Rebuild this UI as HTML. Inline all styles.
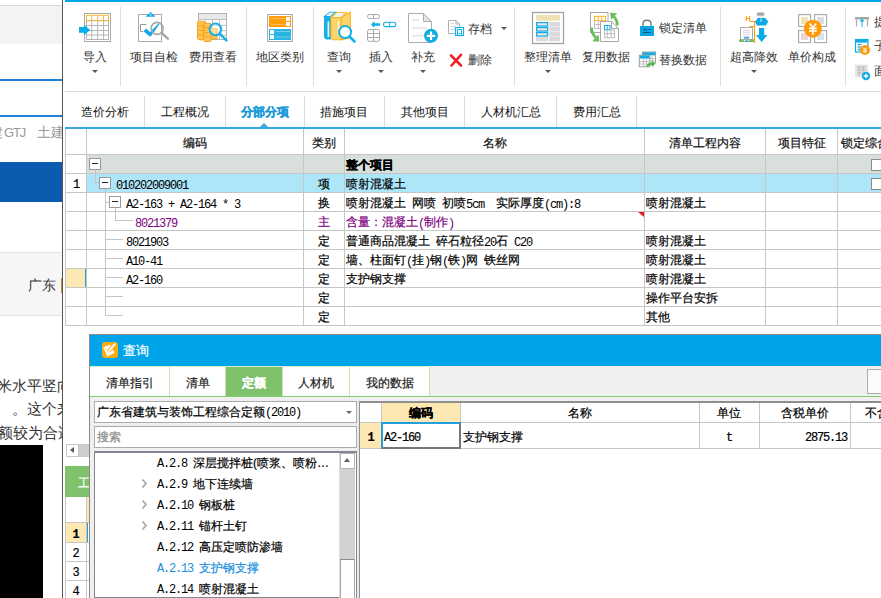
<!DOCTYPE html>
<html><head><meta charset="utf-8">
<style>
*{margin:0;padding:0;box-sizing:border-box}
html,body{width:881px;height:598px;overflow:hidden;background:#fff;position:relative;font-family:"Liberation Sans",sans-serif;font-size:12px;color:#000}
.a{position:absolute}
.m{font-family:"Liberation Mono",monospace;letter-spacing:-1.2px;-webkit-text-stroke-width:0}
.mb{position:relative;top:1px}
.t{position:absolute;white-space:nowrap;line-height:12px;font-size:12px;-webkit-text-stroke-width:0.2px}
.sep{position:absolute;width:1px;background:#dedede}
.rt{-webkit-text-stroke-width:0}
.rb{position:absolute;white-space:nowrap;line-height:12px;font-size:12px;color:#333;text-align:center;padding-top:1px}
.arr{position:absolute;width:0;height:0;border-left:3px solid transparent;border-right:3px solid transparent;border-top:3px solid #555}
.tab{position:absolute;top:92px;height:35px;text-align:center;line-height:12px;padding-top:14px;font-size:12px;color:#111}
.tsep{position:absolute;top:96px;height:31px;width:1px;background:#dcdcdc}
.vl{position:absolute;width:1px;background:#c6c6c6}
.hl{position:absolute;height:1px;background:#c6c6c6}
.box{position:absolute;width:12px;height:12px;border:1px solid #9a9a9a;background:#fff}
.box:after{content:"";position:absolute;left:2px;top:4px;width:6px;height:1px;background:#222}
.chk{position:absolute;width:12px;height:12px;border:1px solid #8a8a8a;background:#fff}
</style></head><body>

<!-- ============ background web page on the left ============ -->
<div class="a" style="left:0;top:0;width:62px;height:598px;overflow:hidden">
<div class="a" style="left:0;top:5px;width:62px;height:1px;background:#dadada"></div>
<div class="a" style="left:0;top:6px;width:62px;height:38px;background:#f3f3f3"></div>
<div class="a" style="left:0;top:79px;width:62px;height:2px;background:#1d80d6"></div>
<div class="a" style="left:0;top:115px;width:62px;height:2px;background:#1d80d6"></div>
<div class="t rt" style="left:-11px;top:125px;font-size:14px;line-height:14px;color:#9a9a9a">建</div>
<div class="t rt" style="left:4px;top:126px;font-size:13px;line-height:13px;color:#9a9a9a;letter-spacing:-1.2px">GTJ</div>
<div class="t rt" style="left:37px;top:125px;font-size:14px;line-height:14px;color:#9a9a9a">土建</div>
<div class="a" style="left:0;top:162px;width:62px;height:40px;background:#0c5bb1"></div>
<div class="a" style="left:0;top:252px;width:62px;height:1px;background:#e2e2e2"></div>
<div class="a" style="left:0;top:253px;width:62px;height:62px;background:#f6f6f6"></div>
<div class="a" style="left:0;top:315px;width:62px;height:1px;background:#e2e2e2"></div>
<div class="t rt" style="left:28px;top:278px;font-size:14px;line-height:14px;color:#333">广东</div>
<div class="a" style="left:61px;top:278px;width:1px;height:15px;background:#d08a30"></div>
<div class="t rt" style="left:-3px;top:378px;font-size:15px;line-height:16px;color:#333">米水平竖向</div>
<div class="t rt" style="left:12px;top:401px;font-size:15px;line-height:16px;color:#333">。这个来</div>
<div class="t rt" style="left:-2px;top:425px;font-size:15px;line-height:16px;color:#333">额较为合适</div>
<div class="a" style="left:0;top:445px;width:43px;height:153px;background:#000"></div>

</div>

<!-- ============ app window ============ -->
<div class="a" style="left:62px;top:0;width:1px;height:598px;background:#555"></div>
<div class="a" style="left:65px;top:0;width:816px;height:2px;background:#00a8e9"></div>

<!-- ============ ribbon ============ -->
<div class="a" style="left:65px;top:91px;width:816px;height:1px;background:#dcdcdc"></div>
<div class="sep" style="left:120px;top:7px;height:79px"></div>
<div class="sep" style="left:246px;top:7px;height:79px"></div>
<div class="sep" style="left:313px;top:7px;height:79px"></div>
<div class="sep" style="left:514px;top:7px;height:79px"></div>
<div class="sep" style="left:720px;top:7px;height:79px"></div>
<div class="sep" style="left:845px;top:7px;height:79px"></div>

<svg class="a" style="left:0;top:0" width="881" height="91" shape-rendering="geometricPrecision">
 <!-- 导入 -->
 <rect x="84.5" y="13.5" width="26" height="28" fill="#fff" stroke="#ababab"/>
 <g stroke="#b4b4b4" fill="none">
  <path d="M86.5 20.5H108.5M86.5 25.5H108.5M86.5 30.5H108.5M86.5 35H108.5M86.5 39.5H108.5M86.5 20.5V39.5M91.8 20.5V39.5M97.7 20.5V39.5M103.6 20.5V39.5M108.5 20.5V39.5"/>
 </g>
 <rect x="86.5" y="15.3" width="22" height="5.4" fill="none" stroke="#f9b83a"/>
 <path d="M91.8 15.3V20.7M97.7 15.3V20.7M103.6 15.3V20.7" stroke="#f9b83a"/>
 <path d="M79 27H84V24.7L90.2 30L84 35.2V32.8H79Z" fill="#0aaee8"/>

 <!-- 项目自检 -->
 <rect x="138.5" y="14.5" width="23" height="27" fill="#fff" stroke="#ababab"/>
 <path d="M145.8 16.8L147.8 14H149.2L150 12.2H151.3L152 14H153.3L155.3 16.8Z" fill="#1aa9e6"/><rect x="150" y="14.3" width="1.3" height="1.2" fill="#fff"/>
 <path d="M146.5 24.5H140.5V31.5H143" fill="none" stroke="#9a9a9a"/>
 <path d="M143.5 31.2L146.3 28.6L150 32L158.6 23.6L159.4 24.3L151 36.3H149.3Z" fill="#14a8e6"/>
 <circle cx="157.1" cy="28.4" r="6" fill="none" stroke="#a8a8a8" stroke-width="1.6"/>
 <path d="M161.5 32.8L167.8 38.6" stroke="#a8a8a8" stroke-width="2.6" stroke-linecap="round"/>

 <!-- 费用查看 -->
 <rect x="198.5" y="13.5" width="28" height="26" fill="#fff" stroke="#b0b0b0"/>
 <rect x="199" y="14" width="27" height="5.5" fill="#e8e8e8"/>
 <path d="M198.5 19.5H226.5M198.5 25.3H226.5M198.5 30.8H226.5M198.5 35.2H226.5M205.5 19.5V39.5M212.5 19.5V39.5M219.5 19.5V39.5" stroke="#c0c0c0" fill="none"/>
 <g fill="#fdc452" stroke="#f7a21a" stroke-width="1">
  <path d="M197.5 22.5L199 21.3H204L205.5 22.5V38.5L204 39.8H199L197.5 38.5Z"/>
  <path d="M203.5 24.5L205 23.3H210L211.5 24.5V40.2L210 41.5H205L203.5 40.2Z"/>
  <path d="M211 28.5H217V38.8H211Z"/>
 </g>
 <path d="M197.5 26H205.5M197.5 30.5H205.5M197.5 35H205.5M203.5 28H211.5M203.5 32.5H211.5M203.5 37H211.5" stroke="#f7a21a" fill="none"/>
 <circle cx="215.4" cy="29.4" r="5.8" fill="rgba(255,255,255,.45)" stroke="#15b0e6" stroke-width="2"/>
 <path d="M219.6 33.6L226.4 40.4" stroke="#15b0e6" stroke-width="2.6" stroke-linecap="round"/>

 <!-- 地区类别 -->
 <rect x="267.5" y="14.5" width="25" height="27" fill="#fff" stroke="#aaaaaa"/>
 <rect x="269" y="16" width="22" height="11" fill="#ff9d0c"/>
 <rect x="286" y="17" width="4" height="4" fill="#fff"/><rect x="286" y="22" width="4" height="4" fill="#fff"/>
 <path d="M270.5 18.5H285M270.5 24.5H285" stroke="#ffc070" stroke-width="0.8"/>
 <rect x="269" y="29" width="22" height="11" fill="#2ab4e2"/>
 <rect x="270" y="30" width="4" height="4" fill="#fff"/><rect x="270" y="35" width="4" height="4" fill="#fff"/>
 <path d="M275.5 31.5H290M275.5 37H290" stroke="#7fd6f2" stroke-width="0.8"/>

 <!-- 查询 -->
 <path d="M324.5 16.5L329.8 12.3H335.5L330.5 16.5Z" fill="#fff" stroke="#15b0e8" stroke-width="1.1"/>
 <path d="M326.5 15.5L330.5 12.5M328.5 15.8L332.8 12.5" stroke="#d8d8d8" stroke-width="0.9"/>
 <path d="M324 16.5H331V39.5H326L324 37.5Z" fill="#15b0e8"/>
 <rect x="327.6" y="21.5" width="1.6" height="15.5" fill="#fff"/>
 <path d="M331.3 17.5L336.3 12.5H346.5L341.3 17.5Z" fill="#fff" stroke="#f7b524" stroke-width="1.1"/>
 <path d="M334 16.5L338.5 12.8M337 16.7L341.8 12.8M340 16.7L344.5 12.8" stroke="#dcdcdc" stroke-width="0.9"/>
 <path d="M341.3 17.5L350.3 12.3V37.8L341.3 39.7Z" fill="#fdd46a" stroke="#f7b524" stroke-width="1.1"/>
 <path d="M331 17.5H341.3V39.7H333.2L331 37.8Z" fill="#fdd46a" stroke="#f7b524" stroke-width="1.1"/>
 <rect x="337.8" y="21.5" width="1.4" height="12" fill="#fff"/>
 <circle cx="345.1" cy="32.1" r="6" fill="#fff" stroke="#15b0e8" stroke-width="2"/>
 <path d="M349.5 36.5L354.5 41.5" stroke="#15b0e8" stroke-width="2.6" stroke-linecap="round"/>

 <!-- 插入 -->
 <rect x="367.5" y="14.5" width="12" height="4" rx="2" fill="none" stroke="#a8a8a8"/>
 <path d="M373.5 14.5V18.5" stroke="#a8a8a8"/>
 <path d="M371 24.5L374.5 21V23.3H380V25.7H374.5V28Z" fill="#15b0e8"/>
 <rect x="383.5" y="22.3" width="12.3" height="4.3" rx="2.1" fill="none" stroke="#15b0e8" stroke-width="1.1"/>
 <path d="M389.6 22.3V26.6" stroke="#15b0e8"/>
 <rect x="367.5" y="29.5" width="12" height="11.8" rx="2" fill="none" stroke="#a8a8a8"/>
 <path d="M367.5 33.5H379.5M367.5 37.5H379.5M373.5 29.5V41.3" stroke="#a8a8a8"/>

 <!-- 补充 -->
 <path d="M408.5 13.5H423.5L431.5 21.5V42.5H408.5Z" fill="#fff" stroke="#acacac"/>
 <path d="M423.5 13.5V21.5H431.5Z" fill="#e4e4e4" stroke="#acacac"/>
 <path d="M412 20H419M412 28H427M412 35.7H424" stroke="#e2e2e2" stroke-width="1.6"/>
 <circle cx="431" cy="35.8" r="7" fill="#13ade6"/>
 <path d="M431 31.6V40M426.8 35.8H435.2" stroke="#fff" stroke-width="2.2"/>

 <!-- 存档 small -->
 <path d="M448.5 20.5H456L459.5 24V33.5H448.5Z" fill="#fff" stroke="#b0b0b0"/>
 <path d="M456 20.5V24H459.5" fill="none" stroke="#b0b0b0"/>
 <path d="M450.5 23.5H454M450.5 26.5H456M450.5 29.5H455" stroke="#d8d8d8"/>
 <rect x="455.5" y="27.5" width="8" height="8" fill="#fff" stroke="#15b0e8" stroke-width="1.2"/>
 <path d="M457.5 29.5H461.5V32.5M457.5 29.5V35.5M461.5 31V35.5M458.5 33.5H460.5" stroke="#15b0e8" fill="none"/>
 <!-- 删除 X -->
 <path d="M451 55.5L461 65.5M461 54.8L451.5 65.5" stroke="#f0212a" stroke-width="2.6" stroke-linecap="round"/>

 <!-- 整理清单 -->
 <rect x="532.5" y="12.5" width="31" height="31" fill="#fff" stroke="#a2a2a2" stroke-width="1.3"/>
 <rect x="536" y="15" width="24" height="5.7" fill="#eee1b4"/>
 <g fill="#fbe4dc" stroke="#10aee8" stroke-width="1.3">
  <rect x="536.6" y="22.6" width="11" height="3.4"/>
  <rect x="536.6" y="27.6" width="11" height="3.4"/>
  <rect x="536.6" y="32.6" width="11" height="3.4"/>
 </g>
 <g fill="#dcdadf">
  <rect x="549.2" y="22" width="10.8" height="4.6"/><rect x="549.2" y="27" width="10.8" height="4.6"/>
  <rect x="549.2" y="32" width="10.8" height="4.6"/><rect x="549.2" y="37" width="10.8" height="4.3"/>
  <rect x="536" y="37" width="12" height="4.3"/>
 </g>

 <!-- 复用数据 -->
 <rect x="590.5" y="12.5" width="17.5" height="20" fill="#fff" stroke="#a8a8a8"/>
 <rect x="594.5" y="16.3" width="11" height="4.4" fill="#fff" stroke="#fbb11f"/>
 <path d="M598.2 16.3V20.7M601.8 16.3V20.7" stroke="#fbb11f"/>
 <path d="M594.5 20.7V28.5H600M598.2 20.7V28.5M594.5 24.5H600" stroke="#bcbcbc" fill="none"/>
 <path d="M600.5 21.5H611.5L618.5 28.5V41.5H600.5Z" fill="#fff" stroke="#a8a8a8"/>
 <path d="M611.5 21.5V28.5H618.5" fill="none" stroke="#a8a8a8"/>
 <rect x="604.5" y="25.5" width="5.5" height="4.4" fill="none" stroke="#10aee8"/>
 <path d="M607.2 25.5V30" stroke="#10aee8"/>
 <path d="M604.5 30V37.7H614.5V30M604.5 33.8H614.5M607.2 30V37.7M611 30V37.7M610 30H614.5" stroke="#bcbcbc" fill="none"/>
 <path d="M617.3 25.5C617.3 21.5 616 18.5 613.5 16.3" stroke="#6cbf5c" stroke-width="2.8" fill="none"/>
 <path d="M610 12.8L617.2 13.2L611.2 19.8Z" fill="#6cbf5c"/>
 <path d="M591.6 27.5C591.6 31.5 593 35 596 37.8" stroke="#6cbf5c" stroke-width="2.8" fill="none"/>
 <path d="M599.3 41.7L592.2 41.3L598.6 34.6Z" fill="#6cbf5c"/>

 <!-- 锁定清单 lock -->
 <path d="M643 26V23.5C643 21.2 644.8 20.2 647 20.2C649.2 20.2 651 21.2 651 23.5V26" fill="none" stroke="#7a7a7a" stroke-width="1.4"/>
 <rect x="640" y="26" width="14" height="10" fill="#09a7e6"/>
 <path d="M643 29.5H645.5M648.5 29.5H651M643 32.5H651M646.2 28.5V31" stroke="#1d4e6c" stroke-width="0.9"/>

 <!-- 替换数据 -->
 <rect x="642.5" y="52" width="13" height="11" fill="#fff" stroke="#a0a0a0"/>
 <rect x="643" y="52.3" width="12.2" height="3" fill="#11abe6"/>
 <rect x="639.3" y="55.3" width="10.5" height="11.5" fill="#fff" stroke="#a0a0a0"/>
 <rect x="639.8" y="55.6" width="9.7" height="3" fill="#11abe6"/>
 <path d="M639.5 61.5H649.5M639.5 64H649.5M643.5 58.5V66.8M646.5 58.5V66.8M652 55.5V63M650 58.5H655.5M650 60.8H655.5" stroke="#b4b4b4" stroke-width="0.8"/>
 <path d="M646.5 66.8C647 63.5 649 62.5 652 62.5V60.3L655.3 63.8L652 67.3V65C650 65 648.5 65.8 648 67" fill="#52b94a"/>

 <!-- 超高降效 -->
 <rect x="740.5" y="27.5" width="12" height="12" fill="#fff" stroke="#aaaaaa"/>
 <path d="M743 30.5H750M743 32.5H750M743 34.5H750M743 36.5H750M744 29.5V37.5M746.5 29.5V37.5M749 29.5V37.5" stroke="#e0e0e0" stroke-width="0.9"/>
 <rect x="744" y="37" width="5" height="1.5" fill="#22aee8"/>
 <rect x="745" y="38.5" width="3" height="2.5" fill="#aaaaaa"/>
 <path d="M739 42V40.2C739 39.2 741 38.8 742.5 39.5L744 40.5V42Z" fill="#74bf5f"/>
 <path d="M749 42V40.5L750.5 39.3C752 38.6 754 39 754 40.2V42Z" fill="#74bf5f"/>
 <path d="M744.5 41.5H749" stroke="#22aee8"/>
 <path d="M746.3 16V21M749.6 16V21M746.3 18.5H749.6M749.6 21.5H754.5V43M749.6 26.5H754.5" fill="none" stroke="#ff9a10" stroke-width="1.1"/>
 <path d="M756.3 14.8L757.8 12.4H763.4L764.8 14.8L763.4 15.8H757.8Z" fill="#a6a6a6"/>
 <path d="M757.5 16.5H763.6V18H757.5Z" fill="#e8e8e8"/>
 <path d="M758 18L755 21.5L756.8 25.5H766L768.2 21.5L765.2 18Z" fill="#0aa9e7"/>
 <path d="M761 18.3V22" stroke="#fff" stroke-width="0.8"/>
 <path d="M759 28H764.2V35H767.4L761.6 42L755.9 35H759Z" fill="#0aa9e7"/>

 <!-- 单价构成 -->
 <g fill="#fff" stroke="#a8a8a8" stroke-width="1.1">
  <rect x="798.6" y="14.6" width="12" height="11.8"/><rect x="814.6" y="14.6" width="12" height="11.8"/>
  <rect x="798.6" y="30.6" width="12" height="12"/><rect x="814.6" y="30.6" width="12" height="12"/>
 </g>
 <rect x="801" y="17" width="7" height="7" fill="#efe2b4"/>
 <rect x="817" y="17" width="7" height="7" fill="#dcdce2"/>
 <rect x="801" y="33" width="7" height="7" fill="#efd5da"/>
 <rect x="817" y="33" width="7" height="7" fill="#d5e4f0"/>
 <circle cx="812.9" cy="28.7" r="9" fill="#ff9a06"/>
 <path d="M809.5 23.5L812.9 27.5L816.3 23.5M809 28.3H816.8M809 31H816.8M812.9 27.5V35" stroke="#fff" stroke-width="1.7" fill="none"/>

 <!-- right small icons -->
 <path d="M855 17H869V19.5H855Z" fill="#a8a8a8"/>
 <path d="M856.5 19.5V26.5M867.5 19.5V26.5" stroke="#b0b0b0" stroke-width="1.3"/>
 <path d="M862 19V27" stroke="#6fcdf0" stroke-width="1.6"/>
 <path d="M859.5 21.5L862 18.5L864.5 21.5" fill="#1aaee8"/>
 <rect x="855.5" y="39.5" width="12.5" height="12.5" fill="#fff" stroke="#11abe6" stroke-width="1.2"/>
 <rect x="856" y="40" width="11.5" height="2.6" fill="#11abe6"/>
 <path d="M857.5 44.5H862M857.5 47H862M857.5 49.5H862M859 44V51" stroke="#11abe6" stroke-width="0.8"/>
 <circle cx="865" cy="50" r="5" fill="#ff9a06"/>
 <path d="M863 47.5L865 49.5L867 47.5M863 50H867M863 51.6H867M865 49.5V53.5" stroke="#fff" stroke-width="0.9" fill="none"/>
 <rect x="855" y="64.5" width="13" height="13" fill="#e6e6e6"/>
 <path d="M857 67H866M857 70H866M857 73H863M859 66V76M863 66V76" stroke="#b4b4b4" stroke-width="0.9"/>
 <circle cx="866" cy="76" r="4.2" fill="#13ade6"/>
 <path d="M866 73.8V78.2M863.8 76H868.2" stroke="#fff" stroke-width="1.3"/>
</svg>

<div class="rb" style="left:71px;top:50px;width:48px">导入</div>
<div class="arr" style="left:92px;top:70px"></div>
<div class="rb" style="left:130px;top:50px;width:48px">项目自检</div>
<div class="rb" style="left:189px;top:50px;width:48px">费用查看</div>
<div class="rb" style="left:256px;top:50px;width:48px">地区类别</div>
<div class="rb" style="left:315px;top:50px;width:48px">查询</div>
<div class="arr" style="left:336px;top:70px"></div>
<div class="rb" style="left:357px;top:50px;width:48px">插入</div>
<div class="arr" style="left:378px;top:70px"></div>
<div class="rb" style="left:399px;top:50px;width:48px">补充</div>
<div class="arr" style="left:420px;top:70px"></div>
<div class="t rt" style="left:468px;top:23px;color:#333">存档</div>
<div class="arr" style="left:501px;top:27px"></div>
<div class="t rt" style="left:468px;top:54px;color:#333">删除</div>
<div class="rb" style="left:524px;top:50px;width:48px">整理清单</div>
<div class="arr" style="left:545px;top:70px"></div>
<div class="rb" style="left:582px;top:50px;width:48px">复用数据</div>
<div class="t rt" style="left:659px;top:22px;color:#333">锁定清单</div>
<div class="t rt" style="left:659px;top:54px;color:#333">替换数据</div>
<div class="rb" style="left:730px;top:50px;width:48px">超高降效</div>
<div class="arr" style="left:751px;top:70px"></div>
<div class="rb" style="left:788px;top:50px;width:48px">单价构成</div>
<div class="t rt" style="left:874px;top:16px;color:#333">提</div>
<div class="t rt" style="left:874px;top:40px;color:#333">子</div>
<div class="t rt" style="left:874px;top:65px;color:#333">面</div>

<!-- ============ tabs ============ -->
<div class="tab" style="left:65px;width:79px;">造价分析</div>
<div class="tab" style="left:145px;width:80px;">工程概况</div>
<div class="tab" style="left:225px;width:79px;color:#1a9ad9;font-weight:bold;-webkit-text-stroke:0.3px #1a9ad9">分部分项</div>
<div class="tab" style="left:304px;width:80px;">措施项目</div>
<div class="tab" style="left:385px;width:79px;">其他项目</div>
<div class="tab" style="left:465px;width:91px;">人材机汇总</div>
<div class="tab" style="left:557px;width:79px;">费用汇总</div>
<div class="tsep" style="left:144px"></div>
<div class="tsep" style="left:225px"></div>
<div class="tsep" style="left:304px"></div>
<div class="tsep" style="left:384px"></div>
<div class="tsep" style="left:464px"></div>
<div class="tsep" style="left:556px"></div>
<div class="tsep" style="left:636px"></div>
<div class="a" style="left:65px;top:127px;width:816px;height:2px;background:#38a8de"></div>
<div class="a" style="left:260px;top:123px;width:0;height:0;border-left:4px solid transparent;border-right:4px solid transparent;border-bottom:4px solid #38a8de"></div>
<!-- ============ grid ============ -->
<div class="hl" style="left:65px;top:154px;width:816px"></div>
<div class="t" style="left:87px;width:216px;top:137px;text-align:center;color:#111">编码</div>
<div class="t" style="left:304px;width:40px;top:137px;text-align:center;color:#111">类别</div>
<div class="t" style="left:345px;width:299px;top:137px;text-align:center;color:#111">名称</div>
<div class="t" style="left:645px;width:120px;top:137px;text-align:center;color:#111">清单工程内容</div>
<div class="t" style="left:766px;width:71px;top:137px;text-align:center;color:#111">项目特征</div>
<div class="t" style="left:841px;top:137px;color:#111">锁定综合单价</div>
<div class="a" style="left:87px;top:155px;width:794px;height:18px;background:#d9e0dc"></div>
<div class="hl" style="left:65px;top:173px;width:816px"></div>
<div class="t" style="left:346px;top:159px;color:#000"><b style="-webkit-text-stroke:0.3px #000">整个项目</b></div>
<div class="chk" style="left:871px;top:159px"></div>
<div class="a" style="left:87px;top:174px;width:794px;height:18px;background:#ade6f8"></div>
<div class="hl" style="left:65px;top:192px;width:816px"></div>
<div class="t m" style="left:66px;width:20px;text-align:center;top:179px">1</div>
<div class="t" style="left:116px;top:178px;color:#000"><span class="m mb">010202009001</span></div>
<div class="t" style="left:304px;width:40px;text-align:center;top:178px;color:#000">项</div>
<div class="t" style="left:346px;top:178px;color:#000">喷射混凝土</div>
<div class="chk" style="left:871px;top:178px"></div>
<div class="hl" style="left:65px;top:211px;width:816px"></div>
<div class="t" style="left:126px;top:197px;color:#000"><span class="m mb">A2-163&nbsp;+&nbsp;A2-164&nbsp;*&nbsp;3</span></div>
<div class="t" style="left:304px;width:40px;text-align:center;top:197px;color:#000">换</div>
<div class="t" style="left:346px;top:197px;color:#000">喷射混凝土<span class="m mb">&nbsp;</span>网喷<span class="m mb">&nbsp;</span>初喷<span class="m mb">5cm&nbsp;&nbsp;</span>实际厚度<span class="m mb">(cm):8</span></div>
<div class="t" style="left:646px;top:197px">喷射混凝土</div>
<div class="hl" style="left:65px;top:230px;width:816px"></div>
<div class="t" style="left:135px;top:216px;color:#800080"><span class="m mb">8021379</span></div>
<div class="t" style="left:304px;width:40px;text-align:center;top:216px;color:#800080">主</div>
<div class="t" style="left:346px;top:216px;color:#800080">含量：混凝土<span class="m mb">(</span>制作<span class="m mb">)</span></div>
<div class="a" style="left:638px;top:212px;width:0;height:0;border-left:6px solid transparent;border-top:5px solid #e8141c"></div>
<div class="hl" style="left:65px;top:249px;width:816px"></div>
<div class="t" style="left:126px;top:235px;color:#000"><span class="m mb">8021903</span></div>
<div class="t" style="left:304px;width:40px;text-align:center;top:235px;color:#000">定</div>
<div class="t" style="left:346px;top:235px;color:#000">普通商品混凝土<span class="m mb">&nbsp;</span>碎石粒径<span class="m mb">20</span>石<span class="m mb">&nbsp;C20</span></div>
<div class="t" style="left:646px;top:235px">喷射混凝土</div>
<div class="hl" style="left:65px;top:268px;width:816px"></div>
<div class="t" style="left:126px;top:254px;color:#000"><span class="m mb">A10-41</span></div>
<div class="t" style="left:304px;width:40px;text-align:center;top:254px;color:#000">定</div>
<div class="t" style="left:346px;top:254px;color:#000">墙、柱面钉<span class="m mb">(</span>挂<span class="m mb">)</span>钢<span class="m mb">(</span>铁<span class="m mb">)</span>网<span class="m mb">&nbsp;</span>铁丝网</div>
<div class="t" style="left:646px;top:254px">喷射混凝土</div>
<div class="a" style="left:66px;top:269px;width:20px;height:18px;background:#fde8b3"></div>
<div class="a" style="left:85px;top:269px;width:2px;height:18px;background:#22a0dc"></div>
<div class="hl" style="left:65px;top:287px;width:816px"></div>
<div class="t" style="left:126px;top:273px;color:#000"><span class="m mb">A2-160</span></div>
<div class="t" style="left:304px;width:40px;text-align:center;top:273px;color:#000">定</div>
<div class="t" style="left:346px;top:273px;color:#000">支护钢支撑</div>
<div class="t" style="left:646px;top:273px">喷射混凝土</div>
<div class="hl" style="left:65px;top:306px;width:816px"></div>
<div class="t" style="left:304px;width:40px;text-align:center;top:292px;color:#000">定</div>
<div class="t" style="left:646px;top:292px">操作平台安拆</div>
<div class="hl" style="left:65px;top:325px;width:816px"></div>
<div class="t" style="left:304px;width:40px;text-align:center;top:311px;color:#000">定</div>
<div class="t" style="left:646px;top:311px">其他</div>
<div class="vl" style="left:65px;top:129px;height:197px"></div>
<div class="vl" style="left:86px;top:129px;height:197px"></div>
<div class="vl" style="left:303px;top:129px;height:197px"></div>
<div class="vl" style="left:344px;top:129px;height:197px"></div>
<div class="vl" style="left:644px;top:129px;height:197px"></div>
<div class="vl" style="left:765px;top:129px;height:197px"></div>
<div class="vl" style="left:837px;top:129px;height:197px"></div>
<div class="vl" style="left:881px;top:129px;height:197px"></div>
<div class="a" style="left:95px;top:170px;width:1px;height:13px;background:#c4c4c4"></div>
<div class="a" style="left:95px;top:182px;width:4px;height:1px;background:#c4c4c4"></div>
<div class="a" style="left:105px;top:189px;width:1px;height:126px;background:#c4c4c4"></div>
<div class="a" style="left:105px;top:202px;width:4px;height:1px;background:#c4c4c4"></div>
<div class="a" style="left:115px;top:208px;width:1px;height:13px;background:#c4c4c4"></div>
<div class="a" style="left:115px;top:220px;width:18px;height:1px;background:#c4c4c4"></div>
<div class="a" style="left:105px;top:239px;width:18px;height:1px;background:#c4c4c4"></div>
<div class="a" style="left:105px;top:258px;width:18px;height:1px;background:#c4c4c4"></div>
<div class="a" style="left:105px;top:277px;width:18px;height:1px;background:#c4c4c4"></div>
<div class="a" style="left:105px;top:296px;width:18px;height:1px;background:#c4c4c4"></div>
<div class="a" style="left:105px;top:315px;width:18px;height:1px;background:#c4c4c4"></div>
<div class="box" style="left:89px;top:158px"></div>
<div class="box" style="left:99px;top:177px"></div>
<div class="box" style="left:109px;top:196px"></div>
<!-- END GRID -->
<!-- ============ lower-left panel behind dialog ============ -->
<div class="a" style="left:66px;top:444px;width:13px;height:13px;background:#fff;border:1px solid #c8c8c8"></div>
<div class="a" style="left:70px;top:447px;width:0;height:0;border-top:3.5px solid transparent;border-bottom:3.5px solid transparent;border-right:4px solid #555"></div>
<div class="a" style="left:79px;top:444px;width:10px;height:13px;background:#cdcdcd"></div>
<div class="a" style="left:65px;top:466px;width:24px;height:31px;background:#7fc26b"></div>
<div class="t" style="left:78px;top:477px;color:#fff;font-size:12px">工</div>
<div class="a" style="left:65px;top:497px;width:24px;height:101px;background:#fff"></div>
<div class="a" style="left:87px;top:497px;width:2px;height:25px;background:#fde8b3"></div>
<div class="a" style="left:65px;top:523px;width:21px;height:19px;background:#fde8b3"></div>
<div class="a" style="left:86px;top:523px;width:2px;height:19px;background:#22a0dc"></div>
<div class="hl" style="left:65px;top:522px;width:24px"></div>
<div class="hl" style="left:65px;top:542px;width:24px"></div>
<div class="hl" style="left:65px;top:561px;width:24px"></div>
<div class="hl" style="left:65px;top:580px;width:24px"></div>
<div class="vl" style="left:65px;top:497px;height:101px"></div>
<div class="vl" style="left:86px;top:497px;height:101px"></div>
<div class="t m" style="left:65px;width:21px;text-align:center;top:529px;font-weight:bold">1</div>
<div class="t m" style="left:65px;width:21px;text-align:center;top:548px">2</div>
<div class="t m" style="left:65px;width:21px;text-align:center;top:567px">3</div>
<div class="t m" style="left:65px;width:21px;text-align:center;top:586px">4</div>

<!-- ============ query dialog ============ -->
<div class="a" style="left:89px;top:334px;width:792px;height:264px;background:#f0f0f0;border-left:1px solid #8e8888;border-top:1px solid #8e8888"></div>
<div class="a" style="left:90px;top:335px;width:791px;height:31px;background:#00a5e9"></div>
<svg class="a" style="left:102px;top:342px" width="16" height="16">
 <rect x="0" y="0" width="16" height="16" rx="3" fill="#fcab12"/>
 <path d="M1.2 5.2L8 2.7L12.7 10.7L5.2 14.4Z" fill="#fff"/>
 <path d="M3.6 7.6L9.3 5.4M5 10.2L10.6 7.9" stroke="#fcc45a" stroke-width="1" stroke-dasharray="1.5 1"/>
 <path d="M6.3 9.6L13.2 1.6" stroke="#fcab12" stroke-width="3.6"/>
 <path d="M6.3 9.6L13.2 1.6" stroke="#fff" stroke-width="2"/>
</svg>
<div class="t" style="left:123px;top:344px;color:#fff;font-size:13px;line-height:13px">查询</div>
<div class="a" style="left:90px;top:366px;width:791px;height:30px;background:#f0f0f0"></div>
<div class="a" style="left:90px;top:366px;width:340px;height:30px;background:#fff"></div>
<div class="a" style="left:226px;top:366px;width:56px;height:30px;background:#7fc26b"></div>
<div class="a" style="left:169px;top:366px;width:1px;height:30px;background:#c6e6b8"></div>
<div class="a" style="left:225px;top:366px;width:1px;height:30px;background:#c6e6b8"></div>
<div class="a" style="left:282px;top:366px;width:1px;height:30px;background:#c6e6b8"></div>
<div class="a" style="left:349px;top:366px;width:1px;height:30px;background:#c6e6b8"></div>
<div class="a" style="left:429px;top:366px;width:1px;height:30px;background:#c6e6b8"></div>
<div class="a" style="left:90px;top:396px;width:791px;height:1px;background:#86cc74"></div>
<div class="a" style="left:90px;top:366px;width:340px;height:1px;background:#d4eecb"></div>
<div class="t" style="left:90px;width:79px;text-align:center;top:377px;color:#222">清单指引</div>
<div class="t" style="left:170px;width:55px;text-align:center;top:377px;color:#222">清单</div>
<div class="t" style="left:226px;width:56px;text-align:center;top:377px;color:#fff;font-weight:bold;-webkit-text-stroke:0.3px #fff">定额</div>
<div class="t" style="left:283px;width:66px;text-align:center;top:377px;color:#222">人材机</div>
<div class="t" style="left:350px;width:79px;text-align:center;top:377px;color:#222">我的数据</div>
<div class="a" style="left:867px;top:369px;width:20px;height:25px;background:#fbfbfb;border:1px solid #adadad"></div>

<!-- left panel -->
<div class="a" style="left:94px;top:401px;width:263px;height:22px;background:#fff;border:1px solid #ababab"></div>
<div class="t" style="left:97px;top:406px">广东省建筑与装饰工程综合定额<span class="m">(2010)</span></div>
<div class="a" style="left:346px;top:411px;width:0;height:0;border-left:3px solid transparent;border-right:3px solid transparent;border-top:3px solid #666"></div>
<div class="a" style="left:94px;top:426px;width:263px;height:22px;background:#fff;border:1px solid #ababab"></div>
<div class="t" style="left:97px;top:431px;color:#8a8a8a">搜索</div>
<div class="a" style="left:94px;top:451px;width:263px;height:147px;background:#fff;border:1px solid #828790;border-top-width:2px"></div>
<div class="a" style="left:339px;top:453px;width:17px;height:145px;background:#fff;border-left:1px solid #dedede"></div>
<div class="a" style="left:340px;top:453px;width:15px;height:16px;background:#fff;border:1px solid #b4b4b4"></div>
<div class="a" style="left:344px;top:458px;width:0;height:0;border-left:3.5px solid transparent;border-right:3.5px solid transparent;border-bottom:4px solid #606060"></div>
<div class="a" style="left:340px;top:469px;width:15px;height:90px;background:#d2d2d2"></div>
<div class="a" style="left:340px;top:559px;width:15px;height:1px;background:#8c8c8c"></div>
<div class="a" style="left:340px;top:560px;width:1px;height:38px;background:#a8a8a8"></div>
<div class="a" style="left:354px;top:560px;width:1px;height:38px;background:#a8a8a8"></div>
<div class="a" style="left:357px;top:397px;width:2px;height:201px;background:#e6ecee"></div>

<div class="t" style="left:157px;top:457px"><span class="m">A.2.8&nbsp;</span>深层搅拌桩(喷浆、喷粉…</div>
<div class="t" style="left:157px;top:478px"><span class="m">A.2.9&nbsp;</span>地下连续墙</div>
<div class="t" style="left:157px;top:499px"><span class="m">A.2.10&nbsp;</span>钢板桩</div>
<div class="t" style="left:157px;top:520px"><span class="m">A.2.11&nbsp;</span>锚杆土钉</div>
<div class="t" style="left:157px;top:541px"><span class="m">A.2.12&nbsp;</span>高压定喷防渗墙</div>
<div class="t" style="left:157px;top:562px;color:#1a8fe0"><span class="m">A.2.13&nbsp;</span>支护钢支撑</div>
<div class="t" style="left:157px;top:583px"><span class="m">A.2.14&nbsp;</span>喷射混凝土</div>
<svg class="a" style="left:140px;top:470px" width="10" height="70">
 <path d="M2.5 9.5L6 13.5L2.5 17.5M2.5 30.5L6 34.5L2.5 38.5M2.5 51.5L6 55.5L2.5 59.5" fill="none" stroke="#a6a6a6" stroke-width="1.7"/>
</svg>

<!-- right grid -->
<div class="a" style="left:359px;top:401px;width:522px;height:197px;background:#fff;border-left:1px solid #8f8f8f;border-top:2px solid #8f8f8f"></div>
<div class="a" style="left:381px;top:403px;width:79px;height:19px;background:#fde8b3"></div>
<div class="a" style="left:360px;top:423px;width:21px;height:25px;background:#fde8b3"></div>
<div class="hl" style="left:360px;top:422px;width:521px"></div>
<div class="hl" style="left:360px;top:448px;width:521px"></div>
<div class="vl" style="left:381px;top:403px;height:46px"></div>
<div class="vl" style="left:460px;top:403px;height:46px"></div>
<div class="vl" style="left:699px;top:403px;height:46px"></div>
<div class="vl" style="left:759px;top:403px;height:46px"></div>
<div class="vl" style="left:850px;top:403px;height:46px"></div>
<div class="a" style="left:381px;top:422px;width:80px;height:27px;border-left:2px solid #22a0dc;border-top:2px solid #22a0dc;border-right:2px solid #777;border-bottom:2px solid #777;background:#fff"></div>
<div class="t" style="left:381px;width:79px;text-align:center;top:407px;font-weight:bold;-webkit-text-stroke:0.3px #000">编码</div>
<div class="t" style="left:460px;width:239px;text-align:center;top:407px">名称</div>
<div class="t" style="left:699px;width:60px;text-align:center;top:407px">单位</div>
<div class="t" style="left:759px;width:91px;text-align:center;top:407px">含税单价</div>
<div class="t" style="left:865px;top:407px">不含税单价</div>
<div class="t m" style="left:360px;width:21px;text-align:center;top:432px;font-weight:bold">1</div>
<div class="t m" style="left:384px;top:432px">A2-160</div>
<div class="t" style="left:463px;top:431px">支护钢支撑</div>
<div class="t m" style="left:699px;width:60px;text-align:center;top:432px">t</div>
<div class="t m" style="left:759px;width:88px;text-align:right;top:432px">2875.13</div>
<!-- END DIALOG -->
</body></html>
